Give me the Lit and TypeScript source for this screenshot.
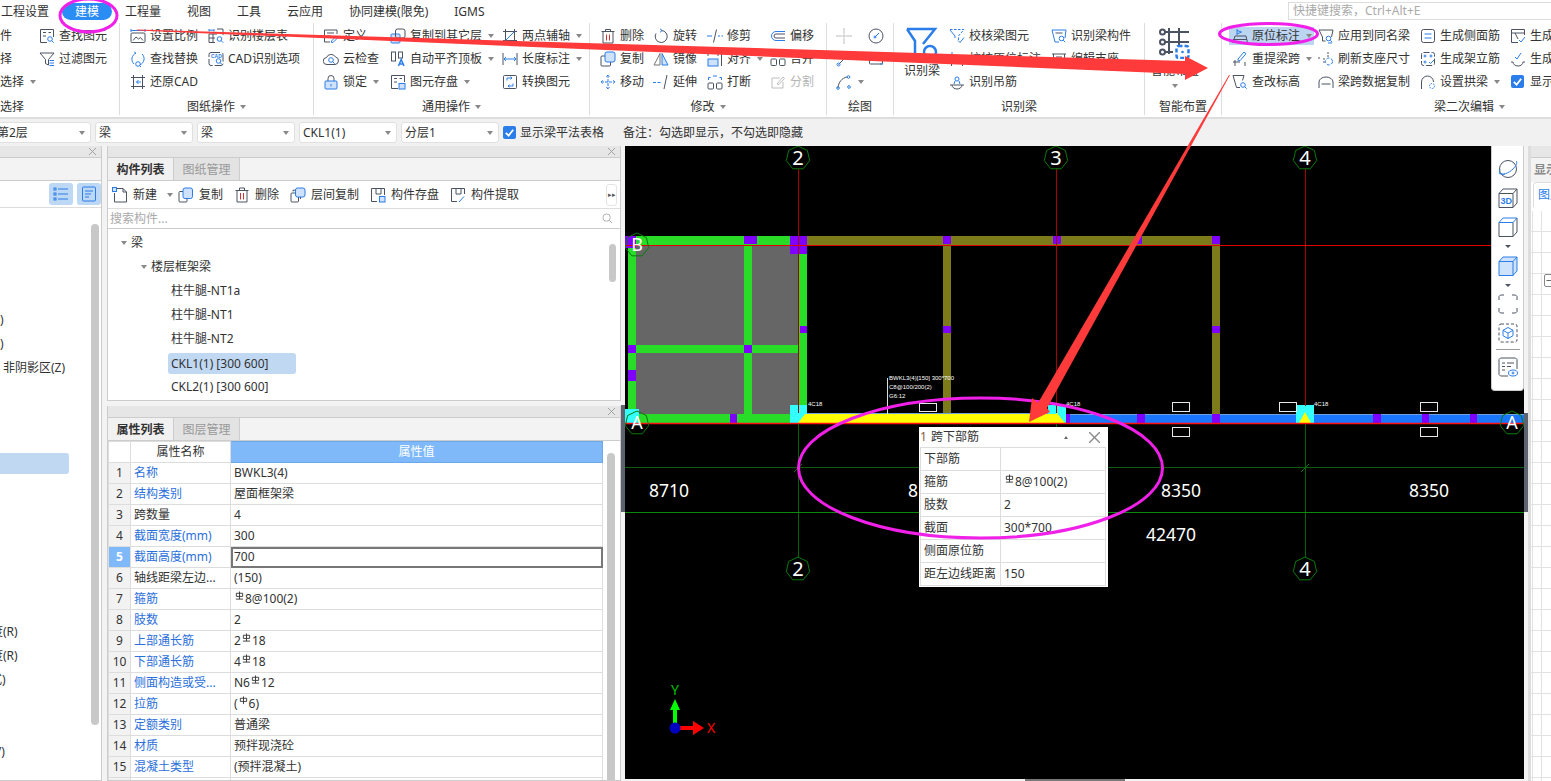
import { LitElement, html, svg, css } from "lit";
import { customElement } from "lit/decorators.js";

type Item = { i?: string; t?: string; arrow?: boolean; off?: boolean; hl?: boolean; check?: boolean };
type Col = { w?: number; big?: boolean; items?: Item[] };
type Group = { w: number; pad: number; label: string; arrow?: boolean; left?: boolean; cols: Col[] };

// 16x16 ribbon icons, default stroke is the dark grey, class b is the blue accent
const mag = (x: number, y: number) => svg`<circle class="b" cx=${x} cy=${y} r="2.3"/><path class="b" d="M${x + 1.7} ${y + 1.7}l2 2"/>`;
const ICONS: Record<string, unknown> = {
  find: svg`<path d="M8 14.500H1.500v-13h13V9"/><path d="M4 4.500h3M4 8h3M9.500 4.500h2.500"/>${mag(11, 11)}`,
  filter: svg`<path d="M1 2h14l-5.500 6.500V14L6.500 12.500v-4z"/><path class="b" d="M10.500 9.500H15M10.500 12H15M10.500 14.500H15"/>`,
  scale: svg`<path class="b" d="M1 1v3M15 1v3M1 2.500h14"/><rect x="1" y="5" width="14" height="9.500" rx="1"/><path d="M3 12.500l3-3.500 2.500 2 2-1.500 2.500 3"/>`,
  replace: svg`<path class="b" d="M4 13A6.500 6.500 0 0 1 6 2.200M6 2.200L4.200 1M12 3a6.500 6.500 0 0 1-2 10.800"/>${mag(8, 13)}`,
  restore: svg`<path d="M1 3.500h14M1 12.500h14M3.500 1v14M12.500 1v14"/><path class="b" d="M11 8H6.500M8.500 6L6.500 8l2 2"/>`,
  floor: svg`<path class="b" d="M1 1v2.500M6 1v2.500M1 2.200h5"/><path d="M1 6h8M1 6v8.500h6M5 6v8.500M1 10h6"/><path d="M9 1h6v6"/>${mag(11.5, 11)}`,
  cadopt: svg`<rect x="1" y="1.500" width="14" height="13" rx="2" stroke-dasharray="9 2"/><text class="tx" x="3" y="6.800">CAD</text>${mag(10.5, 10)}`,
  define: svg`<path d="M14 6V2H1.500v12H7"/><path d="M4 5h7M4 8h4"/><path class="b" d="M8.500 13l5-5 1.500 1.500-5 5H8.500z"/>`,
  copyto: svg`<rect class="fb" x="1" y="6" width="9" height="9" rx="1"/><rect x="5.500" y="1" width="9.500" height="9" rx="2"/>`,
  twoaxis: svg`<path d="M3.500 1v14M1 12.500h14M12.500 1v14M1 3.500h14"/><path class="b" d="M3.500 12.500l9-9"/>`,
  cloud: svg`<path d="M4 13.500a3.500 3.500 0 0 1-.5-7A5 5 0 0 1 12.500 6a3.800 3.800 0 0 1-.5 7.500z"/>${mag(8, 9)}`,
  aligntop: svg`<rect x="1.500" y="1" width="4" height="9"/><rect x="8.500" y="1" width="4" height="6"/><path class="b" d="M8.500 15l2.700-6.500 2.800 6.500M9.500 13h3.500" stroke-width="1.500"/>`,
  length: svg`<path d="M1 2v12M15 2v12"/><path class="b" d="M2 8h12M4 6L2 8l2 2M12 6l2 2-2 2"/>`,
  lock: svg`<path d="M5 7V4.500a3 3 0 0 1 6 0V7"/><rect class="lf" x="2" y="7" width="12" height="8" rx="1"/><path class="b" d="M8 10v2.500"/>`,
  store: svg`<path d="M8 14.500H1.500v-13h13V8"/><path d="M4 4.500h3M4 8h3M9.500 4.500h2.500"/><rect class="lf" x="9" y="9.500" width="6" height="5.500"/>`,
  convert: svg`<rect x="1.500" y="1.500" width="13" height="13" rx="1"/><path class="b" d="M5 6.500V4h5M8.500 2.700L10 4 8.500 5.300M11 9.500V12H6M7.500 10.700L6 12l1.500 1.300"/>`,
  del: svg`<path d="M1.500 3.500h13M5.500 3V1.500h5V3M3 3.500v11.500h10V3.500"/><path class="r" d="M6.500 6.500v6M9.500 6.500v6"/>`,
  rotate: svg`<path d="M8.500 2.500A6 6 0 1 1 3 5.500"/><path class="b" d="M7 .8l2.200 1.700L7 4.300"/>`,
  trim: svg`<path class="b" d="M0 8h5"/><path class="b" d="M11 8h5" stroke-dasharray="2 1.500"/><path d="M9.500 1.500l-3 13"/>`,
  offset: svg`<path class="b" d="M15 3.500H6a4.500 4.500 0 0 0 0 9h9"/><path d="M15 6H6a2 2 0 0 0 0 4h9"/>`,
  copy: svg`<rect x="1" y="5" width="9.500" height="10" rx="1"/><rect class="lf" x="5" y="1" width="10" height="10" rx="2"/>`,
  mirror: svg`<path class="fl" d="M7 2.500L1 14h6z"/><path class="lfp" d="M9 2.500L15 14H9z"/>`,
  alignr: svg`<rect class="lf" x="1" y="8" width="10" height="7"/><path d="M1 5V2.500h10V5M14.500 1v14"/>`,
  merge: svg`<rect x="1" y="8" width="5.500" height="6.500" rx="1"/><rect x="9.500" y="8" width="5.500" height="6.500" rx="1"/><path class="g" d="M1 4h14"/>`,
  move: svg`<path class="b" d="M8 1v14M1 8h14M6.300 2.700L8 1l1.700 1.700M6.300 13.300L8 15l1.700-1.700M2.700 6.300L1 8l1.700 1.700M13.300 6.300L15 8l-1.700 1.700" stroke-dasharray="3 1"/>`,
  extend: svg`<path class="b" d="M0 8.500h9" stroke-dasharray="3 1.500"/><path d="M14 1l-3 14"/>`,
  brk: svg`<rect x="1" y="9" width="5.500" height="6" rx="1"/><rect x="9.500" y="9" width="5.500" height="6" rx="1"/><path class="b" d="M1.500 6V3.500h2M14.500 6V3.500h-2M6 2h4"/>`,
  split: svg`<path class="g" d="M10 4H2v10h11V8M7 10l6-7 1.500 1.500L9 10.500z"/>`,
  point: svg`<path class="g" d="M0 8h6M10 8h6M8 0v6M8 10v6"/><circle class="g" cx="8" cy="8" r="1"/>`,
  clock: svg`<circle cx="8" cy="8" r="7"/><path class="b" d="M6.500 9.500L11 5"/><circle class="b" cx="7" cy="9" r="1"/>`,
  pline: svg`<path d="M2.500 13.500l11-11"/><circle class="b" cx="2.500" cy="13.500" r="1.500"/><circle class="b" cx="13" cy="3" r="1.500"/>`,
  rect: svg`<rect x="1.500" y="3" width="13" height="10" rx="1"/><path class="b" d="M1 3h3M12 13h3"/>`,
  arc: svg`<path d="M2 14C2.500 8 6 4 11 3"/><circle class="b" cx="2" cy="14" r="1.300"/><circle class="b" cx="12.500" cy="3" r="1.300"/><circle class="b" cx="13" cy="13" r="1.300"/>`,
  chkbeam: svg`<path class="b" d="M1 1.500h14L9.500 8v5" stroke-dasharray="2.500 1.500"/><path class="b" d="M1 2l5 6v2"/><path class="b" d="M9 12.500l2 2 4-5"/>`,
  chkorig: svg`<path class="b" d="M3 1v7M3 3.500l4 2-4 2"/><path d="M1 9.500h14M2.500 9.500V15M13.500 9.500V15"/>`,
  hanger: svg`<path d="M1 11h14M3 11a5 4 0 0 0 10 0"/><circle class="b" cx="8" cy="5" r="2"/><path class="b" d="M6 7l-1 3M10 7l1 3"/>`,
  beampart: svg`<path class="b" d="M1 2h14l-1 8M1 2l3 12h4"/><path d="M4.500 5h7"/>${mag(10.5, 10.5)}`,
  support: svg`<path d="M1 3h14M2.500 3v11M13.500 3v6M5 6h6"/><path class="b" d="M8 14l5-5 1.500 1.500-5 5H8z"/>`,
  orig: svg`<path class="b" d="M5 1v6M5 2.500l4.500 1.500L5 6"/><path d="M3 8h11l1.500 7M3 8L.8 15M.8 11.500h14"/>`,
  rebeam: svg`<path class="b" d="M6 8l6-7 2 1.700-6 7H6z"/><path d="M3 9v6M1 11h7M13 11v4"/>`,
  edelev: svg`<path d="M1 1.500h11l-1.500 5M1 1.500l3.500 12H8"/>${mag(11, 11)}`,
  apply: svg`<path d="M1 2h14l-1.500 7M1 2l3.500 7v4h3"/>${mag(10.5, 10.5)}<path class="b" d="M10 15h4"/>`,
  refresh: svg`<path d="M0 7h3M6 7v5M10 1v5" stroke-dasharray="2 1"/><circle class="b" cx="11" cy="10.500" r="3.500" stroke-dasharray="3 1.500"/>`,
  copybeam: svg`<path d="M1 8a7 5 0 0 1 14 0M1 8v6M15 8v6M3.500 10h9"/>`,
  side: svg`<rect x="1.500" y="1.500" width="13" height="13" rx="2"/><path class="b" d="M4.500 6h7M4.500 10h7"/>`,
  stand: svg`<rect x="1.500" y="1.500" width="13" height="13" rx="2" stroke-dasharray="6 2"/><circle class="b" cx="5" cy="5" r="1"/><circle class="b" cx="11" cy="5" r="1"/><circle class="b" cx="5" cy="11" r="1"/><path class="b" d="M9 11l1.500 1.500L14 9"/>`,
  archb: svg`<path d="M1.500 15V8a6 6 0 0 1 12 0"/><circle class="b" cx="12" cy="12" r="2.500" stroke-dasharray="1.500 1"/>`,
  gen1: svg`<path d="M8 14.500H1.500v-13h13V7M1.500 5h13M5 5l3 6"/><path class="b" d="M9 12l2 2 4-5"/>`,
  gen2: svg`<path d="M1 11h2M13 11h2M3 11a5 4 0 0 0 10 0"/><path class="b" d="M5 6l2 2 4-6"/>`,
  "new": svg`<path d="M5 1.500h6l3.500 3.500v10h-12V6"/><path d="M11 1.500V5h3.500"/><rect class="fb" x=".5" y=".5" width="4" height="4"/>`,
  lcopy: svg`<rect x="1" y="4.500" width="8" height="10.500" rx="1"/><rect class="lf" x="5" y="1" width="9.500" height="10.500" rx="2"/>`,
  ltrash: svg`<path d="M1.500 3.500h13M5.500 3V1h5v2M3 3.500v11.500h10V3.500"/><path class="r" d="M6.500 6v6.500M9.500 6v6.500"/>`,
  lfloor: svg`<rect x="1" y="6" width="7.500" height="9" rx="1"/><path d="M3 4.500V3.200H10.500V12"/><rect class="lf" x="5.500" y="1" width="9.500" height="9" rx="2"/>`,
  lstore: svg`<path d="M7 14.500H1.500v-13h13V8M6 1.500v5.500h5V1.500"/><rect class="lf" x="9.500" y="9.500" width="5.500" height="5.500"/>`,
  lpick: svg`<path d="M7 14.500H1.500v-13h13V7M6 1.500v5.500h5V1.500"/><path class="b" d="M9 15l5-5.500"/>`,
};

const BIG: Record<string, unknown> = {
  beam: svg`<path class="bb" d="M1 2h28L17 17M1 2l8 12v14"/><circle class="bb" cx="24" cy="25" r="6"/>`,
  smart: svg`<path class="dd" d="M10 1v26M20 1v17M6 5h24M6 15h24M6 25h8"/><circle class="dd w" cx="3.500" cy="5" r="2.500"/><circle class="dd w" cx="3.500" cy="15" r="2.500"/><circle class="dd w" cx="3.500" cy="25" r="2.500"/><rect class="bb" x="17.500" y="19" width="12" height="12" rx="2" stroke-dasharray="4 2"/><circle cx="23.500" cy="25" r="1.300" fill="#2b7de9" stroke="none"/>`,
};

const GROUPS: Group[] = [
  { w: 120, pad: 0, label: "选择", left: true, cols: [
    { w: 39, items: [{ t: "件" }, { t: "择" }, { t: "选择", arrow: true }] },
    { items: [{ i: "find", t: "查找图元" }, { i: "filter", t: "过滤图元" }] },
  ] },
  { w: 194, pad: 10, label: "图纸操作", arrow: true, cols: [
    { w: 78, items: [{ i: "scale", t: "设置比例" }, { i: "replace", t: "查找替换" }, { i: "restore", t: "还原CAD" }] },
    { items: [{ i: "floor", t: "识别楼层表" }, { i: "cadopt", t: "CAD识别选项" }] },
  ] },
  { w: 276, pad: 9, label: "通用操作", arrow: true, cols: [
    { w: 67, items: [{ i: "define", t: "定义" }, { i: "cloud", t: "云检查" }, { i: "lock", t: "锁定", arrow: true }] },
    { w: 112, items: [{ i: "copyto", t: "复制到其它层", arrow: true }, { i: "aligntop", t: "自动平齐顶板", arrow: true }, { i: "store", t: "图元存盘", arrow: true }] },
    { items: [{ i: "twoaxis", t: "两点辅轴", arrow: true }, { i: "length", t: "长度标注", arrow: true }, { i: "convert", t: "转换图元" }] },
  ] },
  { w: 237, pad: 10, label: "修改", arrow: true, cols: [
    { w: 53, items: [{ i: "del", t: "删除" }, { i: "copy", t: "复制" }, { i: "move", t: "移动" }] },
    { w: 54, items: [{ i: "rotate", t: "旋转" }, { i: "mirror", t: "镜像" }, { i: "extend", t: "延伸" }] },
    { w: 63, items: [{ i: "trim", t: "修剪" }, { i: "alignr", t: "对齐", arrow: true }, { i: "brk", t: "打断" }] },
    { items: [{ i: "offset", t: "偏移" }, { i: "merge", t: "合并" }, { i: "split", t: "分割", off: true }] },
  ] },
  { w: 67, pad: 9, label: "绘图", cols: [
    { w: 32, items: [{ i: "point" }, { i: "pline" }, { i: "arc", arrow: true }] },
    { items: [{ i: "clock" }, { i: "rect" }] },
  ] },
  { w: 251, pad: 13, label: "识别梁", cols: [
    { w: 42, big: true, items: [{ i: "beam", t: "识别梁" }] },
    { w: 102, items: [{ i: "chkbeam", t: "校核梁图元" }, { i: "chkorig", t: "校核原位标注" }, { i: "hanger", t: "识别吊筋" }] },
    { items: [{ i: "beampart", t: "识别梁构件" }, { i: "support", t: "编辑支座" }] },
  ] },
  { w: 77, pad: 15, label: "智能布置", cols: [
    { big: true, items: [{ i: "smart", t: "智能布置", arrow: true }] },
  ] },
  { w: 496, pad: 10, label: "梁二次编辑", arrow: true, cols: [
    { w: 86, items: [{ i: "orig", t: "原位标注", arrow: true, hl: true }, { i: "rebeam", t: "重提梁跨", arrow: true }, { i: "edelev", t: "查改标高" }] },
    { w: 102, items: [{ i: "apply", t: "应用到同名梁" }, { i: "refresh", t: "刷新支座尺寸" }, { i: "copybeam", t: "梁跨数据复制" }] },
    { w: 90, items: [{ i: "side", t: "生成侧面筋" }, { i: "stand", t: "生成架立筋" }, { i: "archb", t: "设置拱梁", arrow: true }] },
    { items: [{ i: "gen1", t: "生成" }, { i: "gen2", t: "生成" }, { check: true, t: "显示" }] },
  ] },
];

const MENUS = ["工程设置", "建模", "工程量", "视图", "工具", "云应用", "协同建模(限免)", "IGMS"];
const SELECTS = ["第2层", "梁", "梁", "CKL1(1)", "分层1"];

// row index -> text and its x shift, the tree is scrolled so most labels are cut at the left edge
const LEFT_ROWS: Record<number, [string, number]> = {
  0: [")", 0], 1: [")", 0], 2: ["非阴影区(Z)", 3], 13: ["度(R)", -9], 14: ["度(R)", -9], 15: ["式)", -10], 18: ["V)", -6],
};

const TOOLS = [
  { i: "new", t: "新建", arrow: true },
  { i: "lcopy", t: "复制" },
  { i: "ltrash", t: "删除" },
  { i: "lfloor", t: "层间复制" },
  { i: "lstore", t: "构件存盘" },
  { i: "lpick", t: "构件提取" },
];

// hrb: the grade III rebar sign, plain: the round bar sign
const hrb = html`<svg class="rb" viewBox="0 0 10 10"><path d="M5 .5v8.500M1 9h8"/><path d="M1.500 2.500h7v3.500h-7z"/></svg>`;
const plain = html`<svg class="rb" viewBox="0 0 10 10"><path d="M5 .5v8.500"/><path d="M1.500 2.500h7v3.500h-7z"/></svg>`;

const PROPS: [string, boolean, unknown][] = [
  ["名称", true, "BWKL3(4)"],
  ["结构类别", true, "屋面框架梁"],
  ["跨数量", false, "4"],
  ["截面宽度(mm)", true, "300"],
  ["截面高度(mm)", true, "700"],
  ["轴线距梁左边...", false, "(150)"],
  ["箍筋", true, html`${hrb}8@100(2)`],
  ["肢数", true, "2"],
  ["上部通长筋", true, html`2${hrb}18`],
  ["下部通长筋", true, html`4${hrb}18`],
  ["侧面构造或受...", true, html`N6${hrb}12`],
  ["拉筋", true, html`(${plain}6)`],
  ["定额类别", true, "普通梁"],
  ["材质", true, "预拌现浇砼"],
  ["混凝土类型", true, "(预拌混凝土)"],
  ["", false, ""],
];

const POPUP: [string, unknown][] = [
  ["下部筋", ""],
  ["箍筋", html`${hrb}8@100(2)`],
  ["肢数", "2"],
  ["截面", "300*700"],
  ["侧面原位筋", ""],
  ["距左边线距离", "150"],
];

// page coordinates, the canvas svg has a matching viewBox
const PURPLE = [
  [625, 236, 11, 12], [744, 236, 13, 8], [790, 236, 17, 18], [943, 236, 8, 8], [1053, 236, 8, 8], [1135, 236, 7, 8], [1212, 236, 8, 8],
  [800, 326, 7, 7], [943, 326, 8, 7], [1212, 326, 8, 7], [628, 345, 8, 8], [744, 345, 8, 8], [628, 370, 8, 11],
  [730, 414, 7, 9], [1066, 414, 4, 9], [1137, 414, 8, 9], [1212, 414, 8, 9], [1373, 414, 8, 9], [1422, 414, 7, 9], [1470, 414, 7, 9],
];
const MARKS = [[919, 403, 17, 8], [1172, 402, 17, 9], [1172, 427, 17, 9], [1279, 402, 17, 9], [1420, 402, 17, 9], [1420, 427, 17, 9]];
const AXES: [string, number, number, number][] = [
  ["2", 798, 158, 20], ["3", 1056, 158, 20], ["4", 1305, 158, 20], ["2", 798, 569, 20], ["4", 1305, 569, 20],
  ["B", 637, 245, 18], ["A", 637, 423, 18], ["A", 1512, 423, 18],
];
const heptagon = (cx: number, cy: number, r: number) =>
  Array.from({ length: 7 }, (_, k) => {
    const a = -Math.PI / 2 + (k * 2 * Math.PI) / 7;
    return `${(cx + r * Math.cos(a)).toFixed(1)},${(cy + r * Math.sin(a)).toFixed(1)}`;
  }).join(" ");

const side = (name: string) => html`<svg class="side" viewBox="0 0 20 20">${SIDE[name]}</svg>`;
const SIDE: Record<string, unknown> = {
  orbit: svg`<circle cx="10" cy="10" r="8.500"/><path class="b" d="M1 14c3 3 10 0 14-4 3-3 5-7 3-8"/><path class="b" d="M2 10c-2 4 1 6 5 5"/>`,
  d3: svg`<path d="M1 5.500L5 1h14v14l-4 4.500H1zM1 5.500h14v14M15 5.500L19 1"/><text class="tx3" x="2.500" y="16">3D</text>`,
  top: svg`<path d="M1 5.500v14h14v-14M15 19.500l4-4.500V1"/><path class="b" d="M1 5.500L5 1h14l-4 4.500zM1 5.500h14"/>`,
  iso: svg`<path class="b" fill="#cfe2fb" d="M1 5.500L5 1h14v14l-4 4.500H1z"/><path class="b" d="M1 5.500h14v14M15 5.500L19 1"/>`,
  frame: svg`<path d="M1 6V2.500L2.500 1H6M14 1h3.500L19 2.500V6M19 14v3.500L17.500 19H14M6 19H2.500L1 17.500V14"/>`,
  box: svg`<rect x="1" y="1" width="18" height="18" rx="2" stroke-dasharray="3 2"/><path class="b" d="M10 4.500l5 2.800v5.400l-5 2.800-5-2.800V7.300zM5 7.300l5 2.800 5-2.800M10 10.100v5.400"/>`,
  note: svg`<path d="M10 19H2.500L1 17.500v-15L2.500 1h15L19 2.500V12"/><path d="M4 6h3M9 6h7M4 9.500h3M9 9.500h4M4 13h3"/><ellipse class="b" cx="15" cy="16" rx="4.500" ry="3"/><circle class="b" cx="15" cy="16" r="1"/>`,
};

@customElement("app-root")
export class AppRoot extends LitElement {
  static styles = css`
    :host {
      display: block;
      position: relative;
      width: 1551px;
      height: 781px;
      overflow: hidden;
      background: #f3f3f3;
      font: 12px/16px "Noto Sans", "Noto Sans CJK SC", sans-serif;
      color: #333;
    }

    .ic { width: 16px; height: 16px; flex: none; fill: none; stroke: #4b5261; stroke-width: 1; }
    .ic .b, .side .b { stroke: #2b7de9; }
    .ic .r { stroke: #d03030; }
    .ic .g { stroke: #bdbdbd; }
    .ic .fb { fill: #cfe2fb; stroke: #2b7de9; }
    .ic .lf { fill: #cfe2fb; stroke: #2b7de9; }
    .ic .fl { stroke: #777; }
    .ic .lfp { fill: #cfe2fb; stroke: #2b7de9; }
    .ic .tx { fill: #2b7de9; stroke: none; font: bold 5px "Liberation Sans", sans-serif; }
    .bigic { width: 32px; height: 32px; flex: none; fill: none; }
    .bb { stroke: #2b7de9; stroke-width: 2.5; }
    .dd { stroke: #4b5261; stroke-width: 2; }
    .dd.w { fill: #fff; }
    .tri { width: 0; height: 0; flex: none; border: 3px solid transparent; border-top: 4px solid #888; border-bottom: 0; }

    /* menu bar */
    .menu { display: flex; align-items: center; height: 22px; padding-left: 1px; background: #fff; position: relative; white-space: nowrap; }
    .menu span { padding: 0 13px; line-height: 17px; border-radius: 9px; margin-left: -13px; margin-right: 13px; }
    .menu .on { background: #2a8cf5; color: #fff; }
    .menu .keys { margin-left: auto; margin-right: -37px; width: 294px; height: 16px; padding: 0 0 0 4px; border: 1px solid #ddd; border-radius: 0; color: #aaa; line-height: 15px; flex: none; }

    /* ribbon */
    .ribbon { display: flex; height: 97px; padding-top: 1px; box-sizing: border-box; background: #fff; border-bottom: 2px solid #ddd; overflow: hidden; white-space: nowrap; }
    .group { flex: none; height: 92px; box-sizing: border-box; border-right: 1px solid #ddd; }
    .cols { display: flex; height: 70px; padding-top: 1px; box-sizing: border-box; }
    .col { flex: none; display: grid; grid-template-rows: repeat(3, 23px); }
    .item { display: flex; align-items: center; gap: 4px; width: max-content; height: 23px; }
    .item .tri { margin-left: 2px; }
    .item.off { color: #b5b5b5; }
    .item.hl { background: #bcd5f0; height: 18px; margin: 3px 0 0 -3px; padding: 0 3px; width: 79px; }
    .chk { width: 13px; height: 13px; flex: none; border-radius: 2px; background: #2b7de9; display: flex; align-items: center; justify-content: center; }
    .chk svg { width: 11px; height: 11px; fill: none; stroke: #fff; stroke-width: 2; }
    .item .chk { margin: 0 2px 0 1px; }
    .bigitem { display: flex; flex-direction: column; align-items: center; width: 30px; padding-top: 3px; }
    .bigitem .lb { margin-top: 5px; line-height: 14px; }
    .bigitem .tri { margin-top: 6px; }
    .glabel { display: flex; justify-content: center; align-items: center; gap: 5px; margin-top: 5px; height: 18px; }
    .glabel.left { justify-content: flex-start; }

    /* select strip */
    .strip { display: flex; align-items: center; gap: 4px; height: 27px; background: #f1f1f1; margin-left: -7px; white-space: nowrap; }
    .sel { display: flex; align-items: center; justify-content: space-between; box-sizing: border-box; width: 98px; height: 21px; flex: none; padding: 0 5px 0 3px; background: #fff; border: 1px solid #e0e0e0; border-radius: 3px; }
    .strip .note { margin-left: 15px; }

    /* panels */
    .main { display: flex; height: 635px; }
    .panel { background: #fff; border: 1px solid #ccc; border-top: 0; position: relative; overflow: hidden; display: flex; flex-direction: column; }
    .phead { flex: none; height: 11px; background: #e6e6e6; border-bottom: 1px solid #ccc; display: flex; justify-content: flex-end; align-items: center; padding-right: 5px; }
    .phead svg { width: 7px; height: 7px; stroke: #999; fill: none; }
    .tabs { flex: none; display: flex; height: 23px; background: #f3f3f3; border-bottom: 1px solid #ccc; box-sizing: border-box; }
    .tabs span { width: 65px; text-align: center; line-height: 23px; background: #e3e3e3; color: #999; border-right: 1px solid #ccc; }
    .tabs span.on { background: #f1f1f1; color: #333; font-weight: 700; }

    .left { width: 102px; flex: none; box-sizing: border-box; margin-right: 5px; border-left: 0; }
    .lefttabs { flex: none; height: 22px; background: #f3f3f3; border-bottom: 1px solid #ccc; }
    .lefttools { flex: none; height: 26px; display: flex; justify-content: flex-end; align-items: center; gap: 4px; border-bottom: 1px solid #ddd; }
    .lefttools i { width: 24px; height: 22px; border-radius: 3px; background: #bcd8f5; display: flex; align-items: center; justify-content: center; }
    .lefttools svg { width: 16px; height: 16px; fill: none; stroke: #2b7de9; }
    .leftlist { flex: 1; padding-top: 100px; overflow: hidden; position: relative; }
    .leftlist div { height: 24px; line-height: 24px; white-space: nowrap; position: relative; }
    .leftlist .sel-row { background: #c0d8f2; width: 69px; height: 21px; margin-top: 1px; margin-bottom: 2px; border-radius: 0 3px 3px 0; }
    .thumb { position: absolute; background: #c8c8c8; border-radius: 4px; }
    .left .thumb { left: 91px; top: 78px; width: 8px; height: 501px; }

    .center { width: 514px; display: flex; flex-direction: column; gap: 5px; flex: none; }
    .center .panel { box-sizing: border-box; }
    .center .top { height: 255px; }
    .center .bottom { flex: 1; }
    .tools { flex: none; display: flex; align-items: center; gap: 11px; box-sizing: border-box; height: 28px; padding: 1px 0 0 4px; border-bottom: 1px solid #ddd; position: relative; }
    .tool { display: flex; align-items: center; gap: 5px; white-space: nowrap; }
    .tool .tri { margin-left: 5px; }
    .tool.wide { margin-right: -6px; }
    .more { position: absolute; right: 3px; top: 3px; width: 9px; height: 20px; border: 1px solid #e4e4e4; border-radius: 3px; font-size: 7px; line-height: 20px; text-align: center; color: #555; }
    .search { flex: none; display: flex; justify-content: space-between; align-items: center; height: 19px; padding: 0 7px 0 2px; border-bottom: 1px solid #ccc; color: #aaa; }
    .search svg { width: 11px; height: 11px; fill: none; stroke: #aaa; }
    .tree { flex: 1; padding-top: 2px; position: relative; overflow: hidden; }
    .node { display: flex; align-items: center; height: 24px; white-space: nowrap; gap: 4px; }
    .node.l0 { padding-left: 13px; }
    .node.l1 { padding-left: 33px; }
    .node.l2 { padding-left: 63px; }
    .node.on span { background: #c0d8f2; height: 21px; line-height: 21px; padding: 0 8px 0 3px; margin-left: -3px; border-radius: 3px; width: 117px; }
    .tree .thumb { left: 501px; top: 15px; width: 7px; height: 38px; }

    .grid { border-collapse: collapse; table-layout: fixed; width: 495px; }
    .grid th, .grid td { height: 20px; padding: 0 3px; border: 1px solid #ddd; font-weight: 400; white-space: nowrap; overflow: hidden; }
    .grid td { line-height: 20px; }
    .grid .no { padding: 0; text-align: center; background: #f2f2f2; }
    .grid .no.on { background: #7fb9f9; color: #fff; font-weight: 700; }
    .grid th { text-align: center; background: #fff; }
    .grid th.val { background: #7fb9f9; color: #fff; border-color: #6aa9ee; }
    .grid .blue { color: #2b6fdc; }
    .grid td.edit { outline: 2px solid #777; outline-offset: -2px; }
    .rb { width: 9px; height: 9px; vertical-align: 3px; fill: none; stroke: #333; stroke-width: 1; margin: 0 1px; }
    .bottom .thumb { left: 499px; top: 47px; width: 8px; height: 340px; }

    /* canvas */
    .stage { width: 899px; margin-left: 4px; flex: none; }
    .canvas { position: relative; width: 899px; height: 633px; background: #000; overflow: hidden; }
    .canvas > svg { display: block; width: 899px; height: 633px; }
    .foot { height: 2px; width: 100px; margin-left: 400px; background: #777; }

    .float { position: absolute; right: 0; top: 0; width: 33px; height: 245px; box-sizing: border-box; padding-top: 13px; background: #fff; border: 1px solid #ccc; border-top: 0; border-radius: 0 0 4px 4px; display: flex; flex-direction: column; align-items: center; }
    .side { width: 20px; height: 20px; flex: none; fill: none; stroke: #4b5261; stroke-width: 1; margin-bottom: 9px; }
    .side .tx3 { fill: #2b7de9; stroke: none; font: bold 9px "Liberation Sans", sans-serif; }
    .float .tri { margin: -1px 0 7.5px; border-top-color: #4b5261; border-width: 3.5px; border-bottom: 0; }
    .float hr { width: 24px; margin: -3px 0 7px; border: 0; border-top: 1px solid #999; }

    .popup { position: absolute; left: 294px; top: 281px; width: 189px; height: 160px; box-sizing: border-box; background: #fff; padding: 0 3px 3px 1px; }
    .ptitle { display: flex; align-items: center; height: 20px; gap: 4px; white-space: nowrap; }
    .ptitle .n { color: #8a5a3a; }
    .ptitle .up { margin-left: auto; margin-right: 17px; border: 2.5px solid transparent; border-bottom: 3.5px solid #666; border-top: 0; }
    .ptitle svg { width: 11px; height: 11px; stroke: #888; fill: none; margin-right: 5px; }
    .ptable { border-collapse: collapse; table-layout: fixed; width: 185px; }
    .ptable td { height: 22px; padding: 0 3px; border: 1px solid #ddd; white-space: nowrap; overflow: hidden; }

    /* right panel */
    .right { flex: 1; min-width: 0; overflow: hidden; margin-left: 4px; border-left: 3px solid #ddd; background: #fff; display: flex; flex-direction: column; }
    .right .rhead { flex: none; height: 12px; background: #e6e6e6; border-bottom: 1px solid #ccc; box-sizing: border-box; }
    .right .rtabs { flex: none; height: 24px; background: #f3f3f3; color: #8a8a8a; font-weight: 700; line-height: 24px; padding-left: 3px; overflow: hidden; white-space: nowrap; }
    .right .rtab { flex: none; height: 24px; margin-left: 2px; border: 1px solid #ddd; border-bottom: 0; border-right: 0; border-radius: 4px 0 0 0; color: #2b7de9; line-height: 24px; padding-left: 4px; background: #fff; white-space: nowrap; }
    .right .rgrid {
      flex: 1;
      margin-top: 4px;
      background-color: #fff;
      background-image:
        repeating-linear-gradient(to bottom, transparent 0 20px, #e2e2e2 20px 21px),
        linear-gradient(to right, transparent 0 1px, #e2e2e2 1px 2px, transparent 2px 10px, #e2e2e2 10px 11px, transparent 11px);
      position: relative;
    }
    .right .plus { position: absolute; left: 13px; top: 63px; width: 12px; height: 11px; border: 1px solid #888; border-radius: 2px; background: #fff; font-size: 10px; line-height: 10px; padding-left: 1px; }

    .overlay { position: absolute; left: 0; top: 0; width: 1551px; height: 781px; pointer-events: none; }
  `;

  private renderItem(it: Item) {
    return html`<div class="item ${it.off ? "off" : ""} ${it.hl ? "hl" : ""}">
      ${it.check ? html`<span class="chk"><svg viewBox="0 0 12 12"><path d="M2 6.500l3 3 5-6.500"/></svg></span>` : ""}
      ${it.i ? html`<svg class="ic" viewBox="0 0 16 16">${ICONS[it.i]}</svg>` : ""}
      ${it.t ? html`<span>${it.t}</span>` : ""}
      ${it.arrow ? html`<i class="tri"></i>` : ""}
    </div>`;
  }

  private renderCol(c: Col) {
    if (c.big) {
      const it = c.items![0];
      return html`<div class="col" style="width:${c.w ?? 30}px;display:block">
        <div class="bigitem">
          <svg class="bigic" viewBox="0 0 32 32">${BIG[it.i!]}</svg>
          <span class="lb">${it.t}</span>
          ${it.arrow ? html`<i class="tri"></i>` : ""}
        </div>
      </div>`;
    }
    return html`<div class="col" style=${c.w ? `width:${c.w}px` : ""}>${c.items!.map((it) => this.renderItem(it))}</div>`;
  }

  private renderRibbon() {
    return html`<div class="ribbon">
      ${GROUPS.map((g) => html`<div class="group" style="width:${g.w}px">
        <div class="cols" style="padding-left:${g.pad}px">${g.cols.map((c) => this.renderCol(c))}</div>
        <div class="glabel ${g.left ? "left" : ""}"><span>${g.label}</span>${g.arrow ? html`<i class="tri"></i>` : ""}</div>
      </div>`)}
    </div>`;
  }

  private renderCanvas() {
    return html`<svg viewBox="625 146 899 633">
      <rect x="636" y="245" width="162" height="169" fill="#666"/>
      <g fill="#28dc28">
        <rect x="625" y="236" width="182" height="9"/>
        <rect x="628" y="236" width="8" height="187"/>
        <rect x="798" y="236" width="9" height="187"/>
        <rect x="744" y="245" width="8" height="169"/>
        <rect x="636" y="345" width="162" height="8"/>
        <rect x="625" y="414" width="173" height="9"/>
      </g>
      <g fill="#7d7a1a">
        <rect x="807" y="236" width="413" height="9"/>
        <rect x="943" y="245" width="8" height="169"/>
        <rect x="1212" y="245" width="8" height="169"/>
      </g>
      <rect x="1066" y="414" width="458" height="9" fill="#1a75ff"/>
      <rect x="1066" y="414" width="458" height="1" fill="#6fa3e0"/>
      <rect x="798" y="413" width="268" height="1" fill="#6fa3e0"/>
      <g fill="#33ffff">
        <rect x="625" y="409" width="14" height="14"/>
        <rect x="790" y="405" width="17" height="18"/>
        <rect x="1048" y="405" width="18" height="18"/>
        <rect x="1296" y="405" width="18" height="18"/>
      </g>
      <g fill="#ffff00">
        <polygon points="798,423 805,414 1056,414 1056,412 1065,423"/>
        <polygon points="1299,423 1305,412 1311,423"/>
      </g>
      <g fill="#8000ff">${PURPLE.map(([x, y, w, h]) => svg`<rect x=${x} y=${y} width=${w} height=${h}/>`)}</g>
      <g fill="none" stroke="#e8e8e8">${MARKS.map(([x, y, w, h]) => svg`<rect x=${x + 0.5} y=${y + 0.5} width=${w} height=${h}/>`)}</g>
      <path d="M887.500 378v36" stroke="#ddd"/>
      <g fill="#fff" font-size="6" font-family="Liberation Sans, sans-serif">
        <text x="889" y="380">BWKL3(4)[150] 300*700</text>
        <text x="889" y="389">C8@100/200(2)</text>
        <text x="889" y="398">G6:12</text>
        <text x="808" y="406">4C18</text>
        <text x="1066" y="406">4C18</text>
        <text x="1314" y="406">4C18</text>
      </g>
      <path d="M798.500 146v267M1056.500 146v267M1305.500 146v260" stroke="#a80000"/>
      <path d="M625 245.500h866" stroke="#e00000"/>
      <path d="M625 423.500h899" stroke="#ff1010" stroke-width="1.500"/>
      <path d="M798.500 424v134M1056.500 424v88M1305.500 424v134" stroke="#006400"/>
      <path d="M625 467.500h899" stroke="#0c5c0c"/>
      <path d="M625 512.500h899" stroke="#0a8a0a"/>
      <path d="M794 472l8-8M1301 472l8-8" stroke="#0a6e0a"/>
      ${AXES.map(([t, x, y, fs]) => svg`
        <polygon points=${heptagon(x, y, 12)} fill=${y > 500 || y < 200 ? "#000" : "none"} stroke="#0a7a0a"/>
        <text x=${x} y=${y + fs * 0.36} text-anchor="middle" fill="#fff" font-size=${fs} font-family="Noto Sans, sans-serif">${t}</text>`)}
      <g fill="#fff" font-size="17.500" font-family="Noto Sans, sans-serif" text-anchor="middle">
        <text x="669" y="497">8710</text>
        <text x="913" y="497">8</text>
        <text x="1181" y="497">8350</text>
        <text x="1429" y="497">8350</text>
        <text x="1171" y="541">42470</text>
      </g>
      <path d="M673 723v-13h-3l5-11 5 11h-3v13z" fill="#00ff00"/>
      <path d="M680 726h13v-5l11 7-11 7v-5h-13z" fill="#ff0000"/>
      <circle cx="675" cy="728" r="5.500" fill="#0000c0"/>
      <text x="675" y="695" text-anchor="middle" fill="#00c000" font-size="14" font-family="Noto Sans, sans-serif">Y</text>
      <text x="711" y="733" text-anchor="middle" fill="#ff0000" font-size="14" font-family="Noto Sans, sans-serif">X</text>
    </svg>`;
  }

  render() {
    const closeX = html`<svg viewBox="0 0 8 8"><path d="M0 0l8 8M8 0L0 8"/></svg>`;
    return html`
      <div class="menu">
        ${MENUS.map((m, i) => html`<span class=${i === 1 ? "on" : ""}>${m}</span>`)}
        <span class="keys">快捷键搜索，Ctrl+Alt+E</span>
      </div>
      ${this.renderRibbon()}
      <div class="strip">
        ${SELECTS.map((s) => html`<div class="sel"><span>${s}</span><i class="tri"></i></div>`)}
        <span class="chk"><svg viewBox="0 0 12 12"><path d="M2 6.500l3 3 5-6.500"/></svg></span>
        <span>显示梁平法表格</span>
        <span class="note">备注：勾选即显示，不勾选即隐藏</span>
      </div>

      <div class="main">
        <section class="panel left">
          <div class="phead">${closeX}</div>
          <div class="lefttabs"></div>
          <div class="lefttools">
            <i><svg viewBox="0 0 16 16"><path d="M5 3h10M5 8h10M5 13h10"/><rect x="1" y="2" width="2" height="2"/><rect x="1" y="7" width="2" height="2"/><rect x="1" y="12" width="2" height="2"/></svg></i>
            <i><svg viewBox="0 0 16 16"><rect x="1.500" y="1" width="13" height="14" rx="1"/><path d="M4 5h8M4 8h6M4 11h4"/></svg></i>
          </div>
          <div class="leftlist">
            ${Array.from({ length: 21 }, (_, r) => {
              if (r === 6) return html`<div class="sel-row"></div>`;
              const row = LEFT_ROWS[r];
              return row ? html`<div style="margin-left:${row[1]}px">${row[0]}</div>` : html`<div></div>`;
            })}
          </div>
          <div class="thumb"></div>
        </section>

        <div class="center">
          <section class="panel top">
            <div class="phead">${closeX}</div>
            <div class="tabs"><span class="on">构件列表</span><span>图纸管理</span></div>
            <div class="tools">
              ${TOOLS.map((t) => html`<div class="tool ${t.arrow ? "wide" : ""}">
                <svg class="ic" viewBox="0 0 16 16">${ICONS[t.i]}</svg><span>${t.t}</span>${t.arrow ? html`<i class="tri"></i>` : ""}
              </div>`)}
              <div class="more">▸▸</div>
            </div>
            <div class="search">
              <span>搜索构件...</span>
              <svg viewBox="0 0 12 12"><circle cx="5" cy="5" r="4"/><path d="M8 8l3 3"/></svg>
            </div>
            <div class="tree">
              <div class="node l0"><i class="tri"></i><span>梁</span></div>
              <div class="node l1"><i class="tri"></i><span>楼层框架梁</span></div>
              <div class="node l2"><span>柱牛腿-NT1a</span></div>
              <div class="node l2"><span>柱牛腿-NT1</span></div>
              <div class="node l2"><span>柱牛腿-NT2</span></div>
              <div class="node l2 on"><span>CKL1(1) [300 600]</span></div>
              <div class="node l2"><span>CKL2(1) [300 600]</span></div>
              <div class="thumb"></div>
            </div>
          </section>

          <section class="panel bottom">
            <div class="phead">${closeX}</div>
            <div class="tabs"><span class="on">属性列表</span><span>图层管理</span></div>
            <table class="grid">
              <colgroup><col style="width:22px" /><col style="width:100px" /><col style="width:372px" /></colgroup>
              <tr><th></th><th>属性名称</th><th class="val">属性值</th></tr>
              ${PROPS.map(([name, blue, val], i) => html`<tr>
                <td class="no ${i === 4 ? "on" : ""}">${i + 1}</td>
                <td class=${blue ? "blue" : ""}>${name}</td>
                <td class=${i === 4 ? "edit" : ""}>${val}</td>
              </tr>`)}
            </table>
            <div class="thumb"></div>
          </section>
        </div>

        <div class="stage">
          <div class="canvas">
            ${this.renderCanvas()}
            <div class="float">
              ${side("orbit")}${side("d3")}${side("top")}<i class="tri"></i>${side("iso")}<i class="tri"></i>${side("frame")}${side("box")}
              <hr />${side("note")}
            </div>
            <div class="popup">
              <div class="ptitle"><span class="n">1</span><span>跨下部筋</span><i class="up"></i>${closeX}</div>
              <table class="ptable">
                <colgroup><col style="width:80px" /><col style="width:105px" /></colgroup>
                ${POPUP.map(([k, v]) => html`<tr><td>${k}</td><td>${v}</td></tr>`)}
              </table>
            </div>
          </div>
          <div class="foot"></div>
        </div>

        <aside class="right">
          <div class="rhead"></div>
          <div class="rtabs">显示设置</div>
          <div class="rtab">图层</div>
          <div class="rgrid"><span class="plus">−</span></div>
        </aside>
      </div>

      <svg class="overlay" viewBox="0 0 1551 781">
        <rect x="621" y="405" width="4" height="107" fill="#5d6470"/>
        <rect x="1524" y="413" width="4" height="99" fill="#5d6470"/>
        <g fill="none" stroke="#f020e8" stroke-width="3">
          <ellipse cx="88.500" cy="15.500" rx="28.500" ry="16.500"/>
          <ellipse cx="1268.500" cy="34" rx="49" ry="10.500"/>
          <ellipse cx="980.500" cy="468" rx="182" ry="70"/>
        </g>
        <g fill="#ff3a3a">
          <polygon points="137,29.500 1185,61 1185,56 1208,68 1185,80 1185,74 137,30.500"/>
          <polygon points="1230,75 1047,408 1050,412 1029,422 1032,398 1038,403 1229,75"/>
        </g>
      </svg>
    `;
  }
}
